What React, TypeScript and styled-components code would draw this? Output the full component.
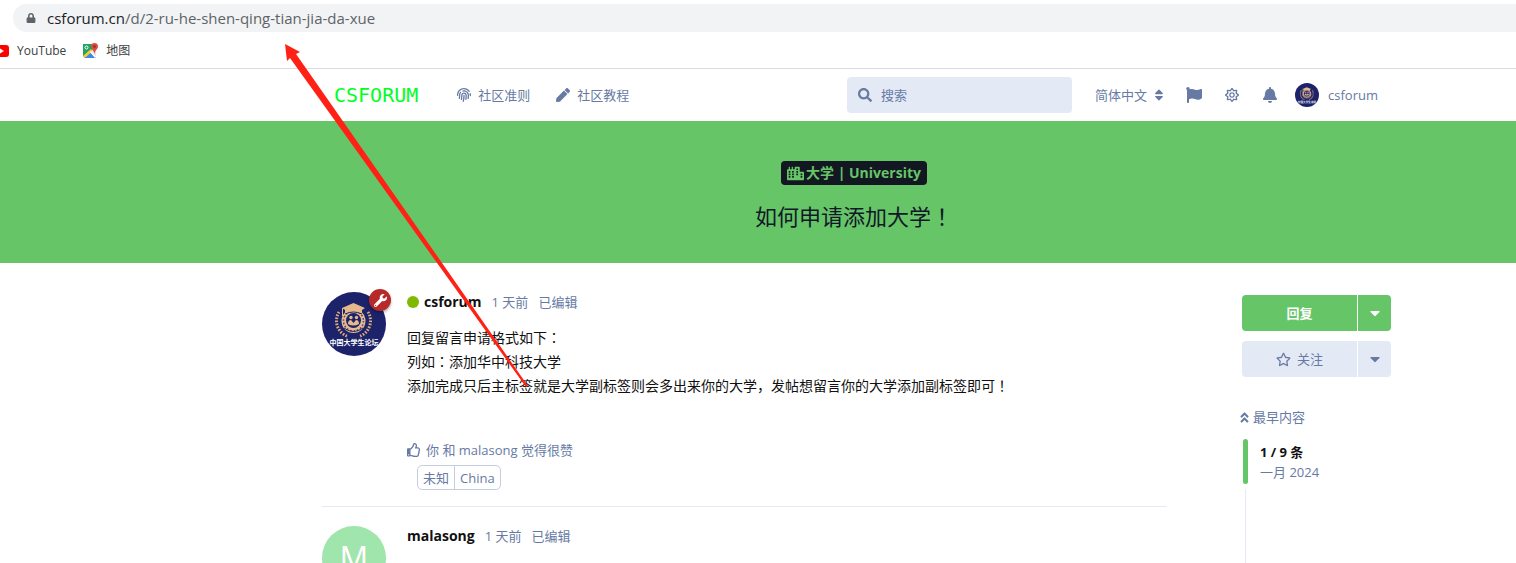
import React from "react";
import styled, { createGlobalStyle } from "styled-components";
import {
  FaFingerprint,
  FaPen,
  FaSearch,
  FaSort,
  FaFlag,
  FaRegSun,
  FaBell,
  FaCity,
  FaWrench,
  FaRegThumbsUp,
  FaRegStar,
  FaCaretDown,
  FaAngleDoubleUp,
  FaLock,
} from "react-icons/fa";

const GREEN = "#66c567";
const MUTED = "#667aa4";
const CONTROL = "#e3e9f5";
const INK = "#111111";

const GlobalStyle = createGlobalStyle`
  * { box-sizing: border-box; }
  body {
    margin: 0;
    background: #fff;
    color: ${INK};
    font: 13px/20px "Open Sans", "Noto Sans CJK SC", sans-serif;
  }
  a { color: inherit; text-decoration: none; }
  button, input, select { font: inherit; color: inherit; border: 0; background: none; padding: 0; margin: 0; }
  button { cursor: pointer; }
  svg { display: block; flex: none; }
  h1, h2, p { margin: 0; }
`;

const Page = styled.div`
  position: relative;
  height: 100vh;
  overflow: hidden;
`;

const BrowserBar = styled.div`
  padding-top: 4px;
  border-bottom: 1px solid #dadce0;
`;

const Address = styled.div`
  display: flex;
  align-items: center;
  gap: 11px;
  height: 28px;
  margin-left: 13px;
  padding-left: 13px;
  border-radius: 14px 0 0 14px;
  background: #f1f3f4;
  color: #5f6368;
  font-size: 15px;
  white-space: nowrap;
`;

const Host = styled.span`
  color: #202124;
`;

const Bookmarks = styled.nav`
  display: flex;
  align-items: center;
  gap: 17px;
  height: 36px;
  padding-top: 1px;
  color: #3c4043;
  font-size: 12px;
`;

const Bookmark = styled.a`
  display: flex;
  align-items: center;
  gap: 8px;
`;

const Header = styled.header`
  display: flex;
  align-items: center;
  height: 52px;
  padding: 0 138px 0 334px;
  color: ${MUTED};
  white-space: nowrap;
`;

const Logo = styled.a`
  color: #00ff1e;
  font: 20px/28px "DejaVu Sans Mono", monospace;
`;

const HeaderNav = styled.nav`
  display: flex;
  gap: 26px;
  margin-left: 39px;
`;

const NavLink = styled.a`
  display: flex;
  align-items: center;
  gap: 7px;
`;

const SearchBox = styled.label`
  display: flex;
  align-items: center;
  gap: 9px;
  width: 225px;
  height: 36px;
  margin-left: auto;
  padding: 0 11px;
  border-radius: 4px;
  background: ${CONTROL};

  input {
    flex: 1;
    min-width: 0;
    outline: none;
  }
  input::placeholder {
    color: ${MUTED};
    opacity: 1;
  }
`;

const HeaderTools = styled.div`
  display: flex;
  align-items: center;
  gap: 22px;
  margin-left: 23px;
`;

const Language = styled.label`
  display: flex;
  align-items: center;
  gap: 4px;
  margin-right: -2px;

  select {
    appearance: none;
    outline: none;
  }
`;

const IconButton = styled.button`
  display: grid;
  place-items: center;
  width: 16px;
  height: 20px;
`;

const UserButton = styled.button`
  display: flex;
  align-items: center;
  gap: 9px;
  margin-left: -5px;
`;

const Hero = styled.section`
  display: flex;
  flex-direction: column;
  align-items: center;
  gap: 16px;
  height: 142px;
  padding: 40px 0 0 192px;
  background: ${GREEN};
  color: #111827;
`;

const UniversityTag = styled.a`
  display: flex;
  align-items: center;
  gap: 2px;
  height: 24px;
  padding: 0 6px;
  border-radius: 4px;
  background: #131722;
  color: ${GREEN};
  font-size: 14px;
  font-weight: 700;
`;

const Title = styled.h1`
  font-size: 22px;
  line-height: 30px;
  font-weight: 400;
`;

/* Full-width colons and exclamation marks sit in the middle of their cell. */
const Mark = styled.span`
  font-family: "Noto Sans CJK TC", sans-serif;
  line-height: 1;
`;

const Content = styled.main`
  display: flex;
  gap: 75px;
  padding: 0 125px 0 322px;
`;

const Stream = styled.div`
  flex: 1;
  min-width: 0;
`;

const Post = styled.article<{ $first?: boolean }>`
  display: flex;
  gap: 21px;
  padding: ${(p) => (p.$first ? "29px" : "19px")} 0 16px;
  border-bottom: 1px solid ${CONTROL};
`;

const AvatarWrap = styled.div`
  position: relative;
  flex: none;
  width: 64px;
  height: 64px;
`;

const AdminBadge = styled.span`
  position: absolute;
  top: -3px;
  right: -5px;
  display: grid;
  place-items: center;
  width: 22px;
  height: 22px;
  border-radius: 50%;
  background: #b72a2a;
  color: #fff;
  box-shadow: 0 2px 3px rgba(0, 0, 0, 0.3);
`;

const LetterAvatar = styled.div`
  width: 64px;
  height: 64px;
  border-radius: 50%;
  background: #a0e5ab;
  color: #fff;
  font-size: 32px;
  line-height: 64px;
  text-align: center;
`;

const PostMain = styled.div`
  flex: 1;
  min-width: 0;
`;

const PostHeader = styled.header`
  display: flex;
  align-items: center;
  gap: 10px;
  height: 20px;
  color: ${MUTED};
`;

const Author = styled.h2`
  display: flex;
  align-items: center;
  gap: 5px;
  color: ${INK};
  font-size: 14px;
  line-height: 20px;
  font-weight: 700;
`;

const OnlineDot = styled.span`
  width: 12px;
  height: 12px;
  border-radius: 50%;
  background: #7fba00;
`;

const PostBody = styled.div`
  margin-top: 14px;
  font-size: 14px;
  line-height: 24px;
`;

const Likes = styled.div`
  display: flex;
  align-items: center;
  gap: 5px;
  margin-top: 42px;
  color: ${MUTED};
`;

const Origin = styled.div`
  display: inline-flex;
  height: 25px;
  margin: 5px 0 0 10px;
  border: 1px solid #c5cede;
  border-radius: 5px;
  color: ${MUTED};
  line-height: 24px;
  vertical-align: top;

  span {
    padding: 0 5px;
  }
  span + span {
    border-left: 1px solid #c5cede;
  }
`;

const Sidebar = styled.aside`
  flex: none;
  width: 149px;
  padding-top: 32px;
`;

const SplitButton = styled.div<{ $primary?: boolean }>`
  display: flex;
  gap: 1px;
  height: 36px;
  margin-bottom: 10px;
  color: ${(p) => (p.$primary ? "#fff" : MUTED)};
  font-weight: ${(p) => (p.$primary ? 700 : 400)};

  button {
    display: flex;
    align-items: center;
    justify-content: center;
    gap: 6px;
    background: ${(p) => (p.$primary ? GREEN : CONTROL)};
  }
  button:first-child {
    flex: 1;
    border-radius: 4px 0 0 4px;
  }
  button:last-child {
    width: 33px;
    border-radius: 0 4px 4px 0;
  }
`;

const FirstLink = styled.a`
  display: flex;
  align-items: center;
  gap: 2px;
  margin: 30px 0 12px -4px;
  color: ${MUTED};
`;

const Scrubber = styled.div`
  display: flex;
  gap: 12px;
  height: 45px;
  padding-left: 1px;
  color: ${MUTED};
`;

const Handle = styled.div`
  width: 5px;
  border-radius: 3px;
  background: ${GREEN};
`;

const Position = styled.div`
  padding-top: 3px;

  strong {
    display: block;
    color: ${INK};
  }
`;

const Track = styled.div`
  width: 1px;
  height: 200px;
  margin: 5px 0 0 3px;
  background: ${CONTROL};
`;

const Arrow = styled.svg`
  position: absolute;
  top: 0;
  left: 0;
  pointer-events: none;
`;

function CrestAvatar({ size }: { size: number }) {
  const id = `crest-${size}`;
  return (
    <svg width={size} height={size} viewBox="0 0 64 64" aria-hidden="true">
      <clipPath id={id}>
        <circle cx="32" cy="32" r="32" />
      </clipPath>
      <g clipPath={`url(#${id})`}>
        <rect width="64" height="64" fill="#1d236b" />
        <path
          d="M17 20a16.500 16.500 0 0 0 9 24.500M46 20a16.500 16.500 0 0 1-9 24.500"
          fill="none"
          stroke="#d9aa7c"
          strokeWidth="3"
          strokeDasharray="1.600 1.400"
        />
        <circle cx="31.500" cy="29" r="12" fill="#e5b98b" />
        <circle cx="31.500" cy="29" r="10" fill="none" stroke="#1d236b" strokeWidth="1.500" strokeDasharray="1.500 2" opacity="0.800" />
        <path d="M31.500 11 43 16l-3 2v4q-8.500-4-17 0v-4l-3-2Z" fill="#e5b98b" />
        <path d="M23 22q8.500-4 17 0" fill="none" stroke="#1d236b" />
        <path d="M20.500 16v8" stroke="#e5b98b" />
        <circle cx="31.500" cy="28.500" r="7.500" fill="#1d236b" />
        <g fill="#e5b98b">
          <circle cx="29" cy="25.500" r="1.700" />
          <circle cx="34.500" cy="25.500" r="1.700" />
          <path d="M26 32q0-4 3-4l2.500 3 2.500-3q3 0 3 4-5.500 3-11 0Z" />
        </g>
        <path d="M22 36q9.500 7 19 0" fill="none" stroke="#1d236b" />
        <text x="32" y="53" textAnchor="middle" fontSize="7" fontWeight="700" fontFamily="Noto Sans CJK SC, sans-serif" fill="#fff">
          中国大学生论坛
        </text>
      </g>
    </svg>
  );
}

function YouTubeIcon() {
  return (
    <svg width="9" height="12" viewBox="0 0 9 12" aria-hidden="true">
      <path d="M0 0h6q3 0 3 3v6q0 3-3 3H0Z" fill="#f00" />
      <path d="M0 3.500 4 6 0 8.500Z" fill="#fff" />
    </svg>
  );
}

function MapsIcon() {
  return (
    <svg width="15" height="16" viewBox="0 0 15 16" aria-hidden="true">
      <path d="M0 1h13v13H0Z" fill="#e4e4e4" />
      <path d="M0 1h10v5L0 14Z" fill="#20a464" />
      <path d="m1 15 6-6 6 6Z" fill="#4384f4" />
      <path d="m0 13 8-7 1.500 2-6.500 6H0Z" fill="#fbcb2d" />
      <path d="m7 9 1.200-1 5 6-1.200 1Z" fill="#fff" />
      <circle cx="3.500" cy="4.500" r="1.500" fill="none" stroke="#fff" />
      <path d="M11.500 0A3.500 3.500 0 0 1 15 3.500C15 6 12 7 11.500 11 11 7 8 6 8 3.500A3.500 3.500 0 0 1 11.500 0Z" fill="#e04a3f" />
      <circle cx="11.500" cy="3.500" r="1.300" fill="#8e2f28" />
    </svg>
  );
}

export default function App() {
  return (
    <>
      <GlobalStyle />
      <Page>
        <BrowserBar>
          <Address>
            <FaLock size={10} />
            <span>
              <Host>csforum.cn</Host>/d/2-ru-he-shen-qing-tian-jia-da-xue
            </span>
          </Address>
          <Bookmarks>
            <Bookmark href="#youtube">
              <YouTubeIcon />
              YouTube
            </Bookmark>
            <Bookmark href="#maps">
              <MapsIcon />
              地图
            </Bookmark>
          </Bookmarks>
        </BrowserBar>

        <Header>
          <Logo href="#home">CSFORUM</Logo>
          <HeaderNav>
            <NavLink href="#rules">
              <FaFingerprint size={14} />
              社区准则
            </NavLink>
            <NavLink href="#guide">
              <FaPen size={14} />
              社区教程
            </NavLink>
          </HeaderNav>
          <SearchBox>
            <FaSearch size={14} />
            <input type="search" placeholder="搜索" aria-label="搜索" />
          </SearchBox>
          <HeaderTools>
            <Language>
              <select aria-label="语言" defaultValue="zh">
                <option value="zh">简体中文</option>
              </select>
              <FaSort size={14} />
            </Language>
            <IconButton aria-label="举报">
              <FaFlag size={16} />
            </IconButton>
            <IconButton aria-label="主题">
              <FaRegSun size={14} />
            </IconButton>
            <IconButton aria-label="通知">
              <FaBell size={16} />
            </IconButton>
            <UserButton>
              <CrestAvatar size={24} />
              csforum
            </UserButton>
          </HeaderTools>
        </Header>

        <Hero>
          <UniversityTag href="#university">
            <FaCity size={17} />
            大学 | University
          </UniversityTag>
          <Title>
            如何申请添加大学<Mark>！</Mark>
          </Title>
        </Hero>

        <Content>
          <Stream>
            <Post $first>
              <AvatarWrap>
                <CrestAvatar size={64} />
                <AdminBadge>
                  <FaWrench size={13} />
                </AdminBadge>
              </AvatarWrap>
              <PostMain>
                <PostHeader>
                  <Author>
                    <OnlineDot />
                    <a href="#csforum">csforum</a>
                  </Author>
                  <time>1 天前</time>
                  <span>已编辑</span>
                </PostHeader>
                <PostBody>
                  <p>
                    回复留言申请格式如下<Mark>：</Mark>
                  </p>
                  <p>
                    列如<Mark>：</Mark>添加华中科技大学
                  </p>
                  <p>
                    添加完成只后主标签就是大学副标签则会多出来你的大学，发帖想留言你的大学添加副标签即可<Mark>！</Mark>
                  </p>
                </PostBody>
                <Likes>
                  <FaRegThumbsUp size={14} />
                  <span>
                    <a href="#me">你</a> 和 <a href="#malasong">malasong</a> 觉得很赞
                  </span>
                </Likes>
                <Origin>
                  <span>未知</span>
                  <span>China</span>
                </Origin>
              </PostMain>
            </Post>
            <Post>
              <LetterAvatar>M</LetterAvatar>
              <PostMain>
                <PostHeader>
                  <Author>
                    <a href="#malasong">malasong</a>
                  </Author>
                  <time>1 天前</time>
                  <span>已编辑</span>
                </PostHeader>
              </PostMain>
            </Post>
          </Stream>

          <Sidebar>
            <SplitButton $primary>
              <button>回复</button>
              <button aria-label="回复选项">
                <FaCaretDown size={16} />
              </button>
            </SplitButton>
            <SplitButton>
              <button>
                <FaRegStar size={15} />
                关注
              </button>
              <button aria-label="关注选项">
                <FaCaretDown size={16} />
              </button>
            </SplitButton>
            <FirstLink href="#first">
              <FaAngleDoubleUp size={13} />
              最早内容
            </FirstLink>
            <Scrubber>
              <Handle />
              <Position>
                <strong>1 / 9 条</strong>
                一月 2024
              </Position>
            </Scrubber>
            <Track />
          </Sidebar>
        </Content>

        <Arrow width="540" height="400" viewBox="0 0 540 400" aria-hidden="true">
          <path d="M285 44 300 52 296 54 528 386 526 387 290 58 287 61Z" fill="#ff2116" />
        </Arrow>
      </Page>
    </>
  );
}
